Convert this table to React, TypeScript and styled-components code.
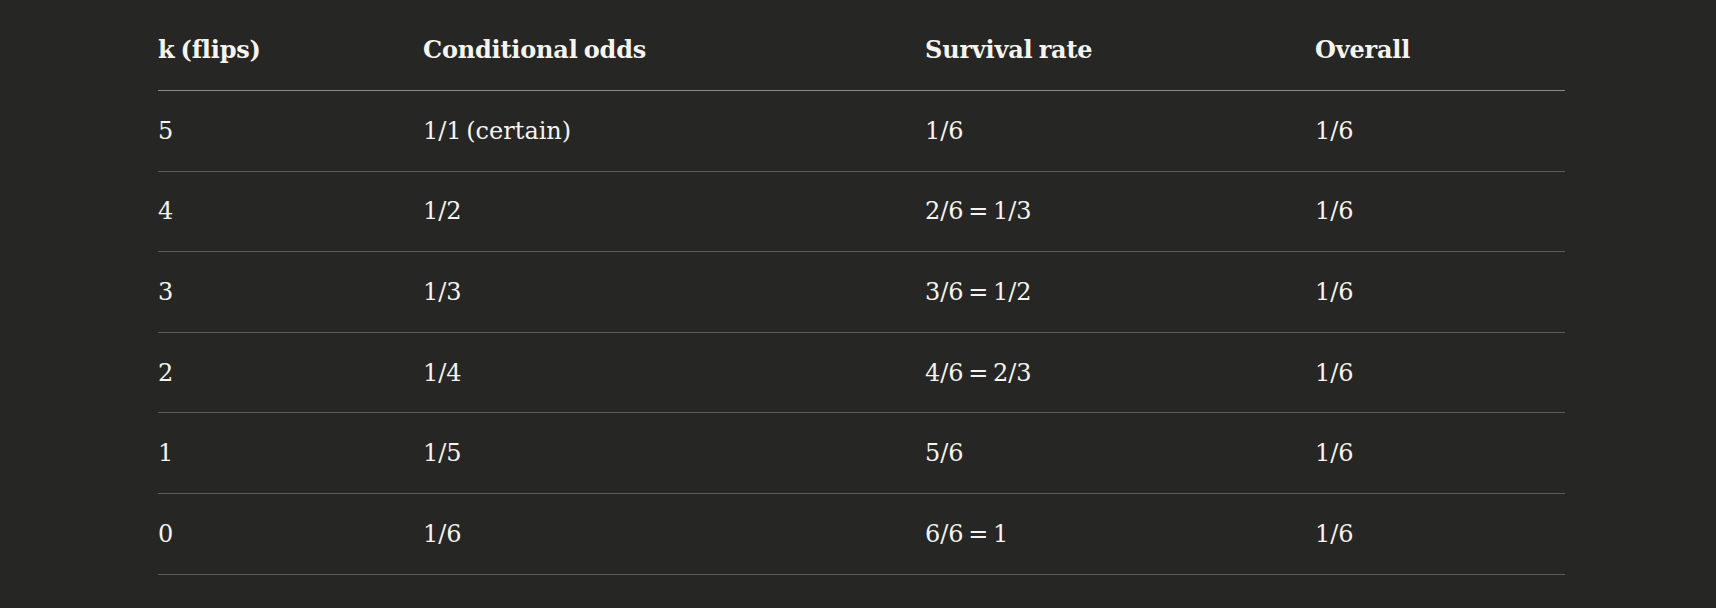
import styled, { createGlobalStyle } from 'styled-components'

const GlobalStyle = createGlobalStyle`
  body {
    margin: 0;
    background: #262624;
    font-family: "DejaVu Serif", "Liberation Serif", serif;
    color: #f5f4ee;
  }
`

type Row = {
  k: string
  odds: string
  survival: string
  overall: string
}

const rows: Row[] = [
  { k: '5', odds: '1/1 (certain)', survival: '1/6', overall: '1/6' },
  { k: '4', odds: '1/2', survival: '2/6 = 1/3', overall: '1/6' },
  { k: '3', odds: '1/3', survival: '3/6 = 1/2', overall: '1/6' },
  { k: '2', odds: '1/4', survival: '4/6 = 2/3', overall: '1/6' },
  { k: '1', odds: '1/5', survival: '5/6', overall: '1/6' },
  { k: '0', odds: '1/6', survival: '6/6 = 1', overall: '1/6' },
]

export default function App() {
  return (
    <>
      <GlobalStyle />
      <Page>
        <Table>
          <colgroup>
            <col style={{ width: 265 }} />
            <col style={{ width: 502 }} />
            <col style={{ width: 390 }} />
            <col style={{ width: 250 }} />
          </colgroup>
          <thead>
            <tr>
              <HeadCell>k (flips)</HeadCell>
              <HeadCell>Conditional odds</HeadCell>
              <HeadCell>Survival rate</HeadCell>
              <HeadCell>Overall</HeadCell>
            </tr>
          </thead>
          <tbody>
            {rows.map((row) => (
              <tr key={row.k}>
                <Cell>{row.k}</Cell>
                <Cell>{row.odds}</Cell>
                <Cell>{row.survival}</Cell>
                <Cell>{row.overall}</Cell>
              </tr>
            ))}
          </tbody>
        </Table>
      </Page>
    </>
  )
}

const Page = styled.div`
  padding: 8px 151px 0 158px;
`

const Table = styled.table`
  width: 1407px;
  border-collapse: collapse;
  table-layout: fixed;
`

const HeadCell = styled.th`
  height: 82px;
  padding: 0;
  text-align: left;
  font-size: 24px;
  font-weight: 600;
  letter-spacing: -0.2px;
  word-spacing: -2px;
  vertical-align: middle;
  border-bottom: 1px solid #8a8a86;
`

const Cell = styled.td`
  height: 79.6px;
  padding: 0;
  font-size: 24px;
  font-weight: 400;
  word-spacing: -3px;
  vertical-align: middle;
  border-bottom: 1px solid #5c5b57;
`
